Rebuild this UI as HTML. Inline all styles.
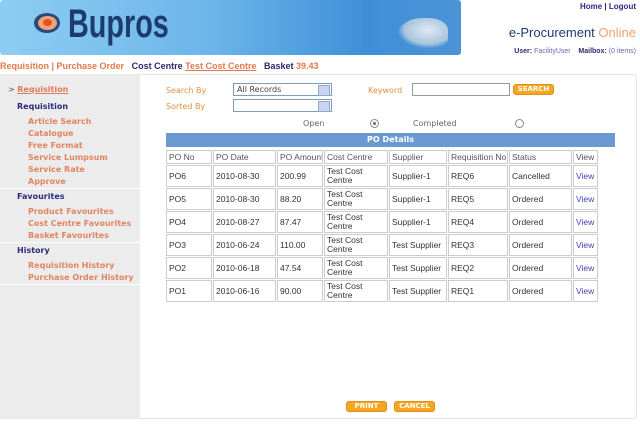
<!DOCTYPE html>
<html><head><meta charset="utf-8"><style>
*{margin:0;padding:0;box-sizing:border-box}
body{width:640px;height:424px;background:#fff;position:relative;overflow:hidden;font-family:Verdana,"DejaVu Sans",sans-serif;font-size:8px;color:#444}
.a{position:absolute;white-space:nowrap}
.or{color:#e07a4a}
.side div{position:absolute;white-space:nowrap}
.lk{color:#e08560;left:28px;font-weight:bold;font-size:8px}
.hd{color:#2a2a7a;font-weight:bold;left:17px;font-size:8px}
.sep{left:0;width:140px;height:1px;background:#fff}
table{border-collapse:separate;border-spacing:1px;position:absolute;left:165px;top:149px;width:434px;font-size:8px;color:#333;font-family:"Liberation Sans",sans-serif;table-layout:fixed}
td{border:1px solid #ccc;padding:0 2px;height:22px;line-height:9px;vertical-align:middle;white-space:nowrap;overflow:hidden;font-size:8.5px}
tr.h td{height:14px;color:#555}
.btn{position:absolute;background:#f5a623;border:1px solid #e0901a;border-radius:3px;color:#fff;font-weight:bold;font-size:7px;text-align:center;line-height:9px;height:11px}
.sel{position:absolute;border:1px solid #7f9db9;background:#fff;height:13px;font-size:8px;padding-left:3px;line-height:11px}
.sel:after{content:"";position:absolute;right:1px;top:1px;width:10px;height:9px;background:#c5d6f5;border:1px solid #9ab}
</style></head><body>
<div class="a" style="left:0;top:0;width:461px;height:55px;border-radius:3px;background:linear-gradient(90deg,#8ecdf2 0%,#6cb6ea 45%,#3f8fd8 80%,#4c93d6 100%)"></div>
<div class="a" style="left:398px;top:18px;width:50px;height:30px;border-radius:50% 40% 30% 50%;background:radial-gradient(ellipse at 60% 40%,#dfeaf3,#a8c4dc 55%,rgba(120,160,200,0) 72%)"></div>
<div class="a" style="left:34px;top:13px;width:26px;height:20px;border-radius:50%;background:#2b4a7a"></div>
<div class="a" style="left:38px;top:16px;width:19px;height:14px;border-radius:50%;background:#f0a27a"></div>
<div class="a" style="left:43px;top:19px;width:9px;height:7px;border-radius:50%;background:#e2551e"></div>
<div class="a" style="left:68px;top:2px;font-family:'Liberation Sans',sans-serif;font-weight:bold;font-size:40px;color:#1d3c6e;transform:scaleX(0.72);transform-origin:0 0">Bupros</div>
<div class="a" style="right:4px;top:2px;font-size:8px;font-weight:bold;color:#2a2a8a;font-family:'Liberation Sans',sans-serif">Home | Logout</div>
<div class="a" style="right:4px;top:25px;font-size:13px;color:#1d3c6e;font-family:'Liberation Sans',sans-serif">e-Procurement<span style="color:#f0a070"> Online</span></div>
<div class="a" style="right:4px;top:48px;font-size:7px;color:#2a2a6a;font-family:'Liberation Sans',sans-serif"><b>User:</b> <span style="color:#6a6ab0">FacilityUser</span> &nbsp;&nbsp;&nbsp;<b>Mailbox:</b> <span style="color:#6a6ab0">(0 items)</span></div>
<div class="a" style="left:0;top:61px;font-size:9px;font-weight:bold;font-family:'Liberation Sans',sans-serif"><span class="or">Requisition | Purchase Order</span> &nbsp;&nbsp;<span style="color:#2a2a6a">Cost Centre</span> <span class="or" style="text-decoration:underline">Test Cost Centre</span> &nbsp;&nbsp;<span style="color:#2a2a6a">Basket</span> <span class="or">39.43</span></div>
<div class="a" style="left:0;top:74px;width:637px;height:345px;border:1px solid #e4e4e4;border-radius:4px;background:#fff"></div>
<div class="a side" style="left:0;top:74px;width:140px;height:345px;background:#ececec">
<div style="left:8px;top:11px;color:#555">&gt; <span style="color:#e07a5a;text-decoration:underline;font-weight:bold">Requisition</span></div>
<div class="hd" style="top:28px">Requisition</div>
<div class="lk" style="top:43px">Article Search</div>
<div class="lk" style="top:55px">Catalogue</div>
<div class="lk" style="top:67px">Free Format</div>
<div class="lk" style="top:79px">Service Lumpsum</div>
<div class="lk" style="top:91px">Service Rate</div>
<div class="lk" style="top:103px">Approve</div>
<div class="sep" style="top:114px"></div>
<div class="hd" style="top:118px">Favourites</div>
<div class="lk" style="top:133px">Product Favourites</div>
<div class="lk" style="top:145px">Cost Centre Favourites</div>
<div class="lk" style="top:157px">Basket Favourites</div>
<div class="sep" style="top:168px"></div>
<div class="hd" style="top:172px">History</div>
<div class="lk" style="top:187px">Requisition History</div>
<div class="lk" style="top:199px">Purchase Order History</div>
<div class="sep" style="top:210px"></div>
</div>
<div class="a" style="left:166px;top:86px;color:#e09040">Search By</div>
<div class="a" style="left:166px;top:102px;color:#e09040">Sorted By</div>
<div class="sel" style="left:233px;top:83px;width:99px">All Records</div>
<div class="sel" style="left:233px;top:99px;width:99px"></div>
<div class="a" style="left:368px;top:86px;color:#e09040">Keyword</div>
<div class="a" style="left:412px;top:83px;width:98px;height:13px;border:1px solid #999;background:#fff"></div>
<div class="btn" style="left:513px;top:84px;width:41px">SEARCH</div>
<div class="a" style="left:303px;top:119px;color:#666">Open</div>
<div class="a" style="left:370px;top:119px;width:9px;height:9px;border:1px solid #888;border-radius:50%;background:#fff"><div style="position:absolute;left:2px;top:2px;width:3px;height:3px;border-radius:50%;background:#3a8a3a"></div></div>
<div class="a" style="left:413px;top:119px;color:#666">Completed</div>
<div class="a" style="left:515px;top:119px;width:9px;height:9px;border:1px solid #888;border-radius:50%;background:#fff"></div>
<div class="a" style="left:166px;top:133px;width:449px;height:14px;background:#6a9ad0;color:#fff;font-weight:bold;text-align:center;line-height:14px">PO Details</div>
<table>
<colgroup><col style="width:46px"><col style="width:63px"><col style="width:46px"><col style="width:64px"><col style="width:58px"><col style="width:60px"><col style="width:63px"><col style="width:25px"></colgroup>
<tr class="h"><td>PO No</td><td>PO Date</td><td>PO Amount</td><td>Cost Centre</td><td>Supplier</td><td>Requisition No</td><td>Status</td><td>View</td></tr>
<tr><td>PO6</td><td>2010-08-30</td><td>200.99</td><td>Test Cost<br>Centre</td><td>Supplier-1</td><td>REQ6</td><td>Cancelled</td><td style="color:#4444bb">View</td></tr>
<tr><td>PO5</td><td>2010-08-30</td><td>88.20</td><td>Test Cost<br>Centre</td><td>Supplier-1</td><td>REQ5</td><td>Ordered</td><td style="color:#4444bb">View</td></tr>
<tr><td>PO4</td><td>2010-08-27</td><td>87.47</td><td>Test Cost<br>Centre</td><td>Supplier-1</td><td>REQ4</td><td>Ordered</td><td style="color:#4444bb">View</td></tr>
<tr><td>PO3</td><td>2010-06-24</td><td>110.00</td><td>Test Cost<br>Centre</td><td>Test Supplier</td><td>REQ3</td><td>Ordered</td><td style="color:#4444bb">View</td></tr>
<tr><td>PO2</td><td>2010-06-18</td><td>47.54</td><td>Test Cost<br>Centre</td><td>Test Supplier</td><td>REQ2</td><td>Ordered</td><td style="color:#4444bb">View</td></tr>
<tr><td>PO1</td><td>2010-06-16</td><td>90.00</td><td>Test Cost<br>Centre</td><td>Test Supplier</td><td>REQ1</td><td>Ordered</td><td style="color:#4444bb">View</td></tr>
</table>
<div class="btn" style="left:346px;top:401px;width:41px">PRINT</div>
<div class="btn" style="left:394px;top:401px;width:41px">CANCEL</div>
</body></html>
